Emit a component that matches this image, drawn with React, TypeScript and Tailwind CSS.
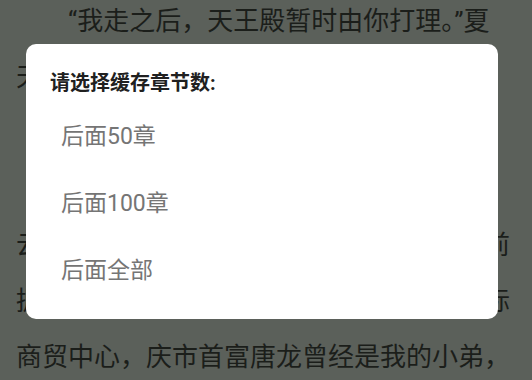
import React from 'react';

const lines: { text: string; indent?: boolean }[] = [
  { text: '“我走之后，天王殿暂时由你打理。”夏', indent: true },
  { text: '天淡淡地说道。' },
  { text: '' },
  { text: '苏小小点了点头，眼中满是不舍，她', indent: true },
  { text: '云海集团的事务你全权负责，在我回来之前' },
  { text: '拥有的产业包括江南市的云海集团，和国际' },
  { text: '商贸中心，庆市首富唐龙曾经是我的小弟，' },
];

const options = ['后面50章', '后面100章', '后面全部'];

export default function App() {
  return (
    <div
      className="relative w-[532px] h-[380px] overflow-hidden bg-[#5b605a]"
      style={{ fontFamily: 'Roboto, "Noto Sans CJK SC", sans-serif' }}
    >
      <div className="-mt-[7px] pl-[16px] text-[26px] text-[#1b1e1a]">
        {lines.map((line, i) => (
          <div
            key={i}
            className={`h-[56px] leading-[56px] whitespace-nowrap ${line.indent ? 'pl-[52px]' : ''}`}
          >
            {line.text}
          </div>
        ))}
      </div>

      <div className="absolute left-[26px] top-[44px] w-[472px] h-[275px] rounded-[10px] bg-white flex flex-col">
        <div className="pt-[26px] pl-[24px] h-[60px] text-[20px] leading-[26px] font-bold text-[#202020]">
          请选择缓存章节数:
        </div>
        <div className="flex flex-col">
          {options.map((opt) => (
            <div
              key={opt}
              className="h-[67px] flex items-center pl-[35px] text-[23px] text-[#757575]"
            >
              {opt}
            </div>
          ))}
        </div>
      </div>
    </div>
  );
}
